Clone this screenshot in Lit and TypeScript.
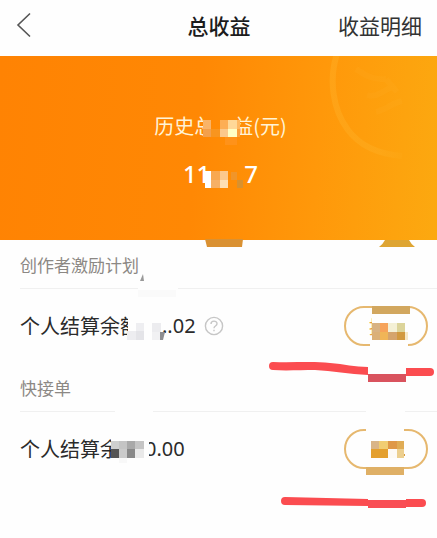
import { LitElement, html, css, svg } from "lit";
import { customElement } from "lit/decorators.js";

type Block = [x: number, y: number, w: number, h: number, fill: string];

const blocks = (list: Block[]) =>
  list.map(([x, y, w, h, fill]) => svg`<rect x=${x} y=${y} width=${w} height=${h} fill=${fill}></rect>`);

const PAPER = "#fefefe";

// Masks are listed in page units; each drawing's viewBox picks its own area.
const summaryMask: Block[] = [
  [203, 120, 8, 9, "#f9b468"],
  [203, 129, 8, 8, "#f3a04c"],
  [211, 129, 9, 8, "#f8951f"],
  [220, 120, 8, 9, "#fdae55"],
  [220, 129, 8, 8, "#fbc88c"],
  [228, 120, 9, 9, "#ffd898"],
  [228, 129, 9, 8, "#ffffc4"],
  [237, 120, 3, 9, "#ffb862"],
  [237, 129, 3, 8, "#fba03c"],
  [225, 137, 12, 8, "#ff9219"],
  [205, 171, 6, 17, "#ffffff"],
  [211, 171, 9, 9, "#f8a850"],
  [211, 180, 9, 8, "#f6b066"],
  [220, 171, 8, 9, "#fcc88c"],
  [220, 180, 8, 8, "#fedfb2"],
  [231, 172, 6, 8, "#f0952a"],
  [237, 180, 6, 8, "#d9912e"],
];

const creatorLeft: Block[] = [
  [138, 286, 40, 5, PAPER],
  [138, 290, 38, 7, "#fafafa"],
  [128, 314, 34, 26, PAPER],
  [127, 331, 9, 9, "#ededf0"],
  [136, 323, 8, 8, "#eeeef1"],
  [136, 331, 8, 9, "#e4e4e8"],
  [152, 323, 9, 9, "#ececef"],
  [152, 332, 8, 8, "#f1f1f3"],
];

const quickLeft: Block[] = [
  [115, 409, 38, 5, PAPER],
  [111, 435, 38, 27, PAPER],
  [111, 441, 8, 8, "#cfcfcf"],
  [119, 441, 8, 8, "#c4c4c4"],
  [127, 441, 8, 8, "#a9a9a9"],
  [135, 441, 9, 8, "#c5c5c5"],
  [111, 449, 8, 9, "#555555"],
  [119, 449, 8, 9, "#cacaca"],
  [127, 449, 8, 9, "#888888"],
  [135, 449, 9, 9, "#e9e9e9"],
  [119, 458, 8, 5, "#f8f8f8"],
];

const creatorRight: Block[] = [
  [372, 303, 38, 3, PAPER],
  [372, 306, 38, 8, "#d2a75f"],
  [370, 343, 38, 4, PAPER],
  [372, 315, 35, 26, PAPER],
  [372, 323, 8, 9, "#d8b283"],
  [372, 332, 8, 8, "#dbb078"],
  [380, 323, 8, 9, "#f6a35a"],
  [380, 332, 8, 8, "#f0b557"],
  [388, 323, 9, 9, "#f4f0d5"],
  [388, 332, 9, 8, "#d5a46c"],
  [397, 323, 8, 9, "#dcd49a"],
  [397, 332, 8, 8, "#d2993f"],
  [405, 332, 3, 8, "#f6e8c8"],
  [368, 374, 38, 8, "#d9535e"],
];

const quickRight: Block[] = [
  [366, 409, 39, 5, PAPER],
  [366, 426, 38, 6, PAPER],
  [366, 467, 38, 8, "#dfb066"],
  [371, 441, 8, 8, "#d9b487"],
  [379, 441, 9, 8, "#f1cd72"],
  [388, 441, 9, 8, "#df9848"],
  [397, 441, 7, 8, "#e0ac55"],
  [371, 449, 17, 9, "#e4a02f"],
  [388, 449, 9, 9, "#fdfaf5"],
  [397, 449, 7, 9, "#eccf8f"],
  [404, 454, 1, 2, "#d99a3a"],
  [368, 500, 38, 8, "#f94d54"],
];

@customElement("app-root")
export class AppRoot extends LitElement {
  static styles = css`
    :host {
      display: block;
      min-height: 100vh;
      background: #fefefe;
      color: #2b2b2b;
      font-family: "Noto Sans", "Noto Sans CJK SC", sans-serif;
    }
    * {
      box-sizing: border-box;
    }
    svg {
      display: block;
    }
    h1, h2, p {
      margin: 0;
      font-weight: 400;
    }
    button {
      padding: 0;
      border: 0;
      background: none;
      font: inherit;
      cursor: pointer;
    }
    .bar {
      display: grid;
      grid-template-columns: 1fr auto 1fr;
      align-items: center;
      height: 56px;
      padding: 0 15px 6px 16px;
      font-family: "Noto Sans CJK SC", sans-serif;
      font-size: 21px;
      line-height: 28px;
    }
    .title {
      font-size: 21px;
      font-weight: 500;
      color: #1c1c1c;
    }
    .detail {
      justify-self: end;
      color: #333;
      text-decoration: none;
    }
    .back {
      justify-self: start;
    }
    .summary {
      position: relative;
      display: flex;
      flex-direction: column;
      align-items: center;
      gap: 20px;
      height: 184px;
      padding: 56px 0 0 4px;
      color: #fff;
      background: linear-gradient(95deg, #ff8303 0%, #ff8804 45%, #ff980a 72%, #fca910 100%);
    }
    .caption {
      display: flex;
      font-family: "Noto Sans CJK SC", sans-serif;
      font-size: 20px;
      line-height: 28px;
      color: #fff3d6;
    }
    .cut {
      width: 9px;
      margin-right: 30px;
      overflow: hidden;
    }
    .total {
      display: flex;
      gap: 34px;
      font-size: 24px;
      line-height: 28px;
      font-weight: 500;
    }
    .coin {
      position: absolute;
      top: 0;
      right: 0;
    }
    .summary-mask {
      position: absolute;
      top: 0;
      left: 50%;
      margin-left: -70px;
    }
    .tab {
      position: absolute;
      top: 100%;
      right: 22px;
    }
    .group {
      position: relative;
    }
    .name {
      height: 49px;
      margin-left: 20px;
      padding-top: 12px;
      border-bottom: 1px solid #f0f0f0;
      font-family: "Noto Sans CJK SC", sans-serif;
      font-size: 17px;
      line-height: 26px;
      color: #8c8884;
    }
    .row {
      display: flex;
      align-items: center;
      height: 74px;
      padding: 0 9px 0 20px;
      font-size: 20px;
      line-height: 28px;
    }
    .label {
      font-family: "Noto Sans CJK SC", sans-serif;
    }
    .near {
      margin-left: 5px;
    }
    .far {
      margin-left: 22px;
    }
    .help {
      margin-left: 8px;
    }
    .pill {
      width: 84px;
      height: 40px;
      margin-left: auto;
      padding-left: 23px;
      border: 2px solid #e6b86f;
      border-radius: 20px;
      font-family: "Noto Sans CJK SC", sans-serif;
      font-size: 18px;
      line-height: 28px;
      text-align: left;
      color: #e8a040;
    }
    .glyph {
      display: block;
      width: 4px;
      height: 28px;
      overflow: hidden;
    }
    .mask {
      position: absolute;
      top: 0;
      pointer-events: none;
    }
    .left {
      left: 0;
    }
    .right {
      right: 0;
    }
    .front {
      z-index: 1;
    }
  `;

  render() {
    return html`
      <header class="bar">
        <button class="back" aria-label="返回">
          <svg width="16" height="26" viewBox="0 0 16 26" fill="none" stroke="#555" stroke-width="1.6">
            <path d="M14 1.5 2 13 14 24.5"></path>
          </svg>
        </button>
        <h1 class="title">总收益</h1>
        <a class="detail" href="#detail">收益明细</a>
      </header>

      <section class="summary">
        <svg class="coin" width="117" height="120" viewBox="320 56 117 120" fill="none" stroke="#ffb02a" aria-hidden="true">
          <defs>
            <linearGradient id="fade" gradientUnits="userSpaceOnUse" x1="330" y1="0" x2="412" y2="0">
              <stop offset="0" stop-color="#ffb42c" stop-opacity=".36"></stop>
              <stop offset=".6" stop-color="#ffb42c" stop-opacity=".3"></stop>
              <stop offset="1" stop-color="#ffb42c" stop-opacity="0"></stop>
            </linearGradient>
          </defs>
          <path d="M337 54C329 78 332 109 348 130C360 146 377 154 402 156" stroke="url(#fade)" stroke-width="6"></path>
          <path d="M356 69C366 76 374 80 386 79M367 95C377 98 384 90 394 86M376 112C386 110 390 104 402 101M386 79L397 92" stroke-opacity=".14" stroke-width="6"></path>
        </svg>
        <p class="caption"><span>历史</span><span class="cut">总</span><span>益(元)</span></p>
        <p class="total"><span>11</span><span>7</span></p>
        <svg class="summary-mask" width="140" height="192" viewBox="149 56 140 192" aria-hidden="true">
          ${blocks(summaryMask)}
          <path d="M205 239H243L242 247H207Z" fill="#da9132"></path>
        </svg>
        <svg class="tab" width="36" height="7" viewBox="0 0 36 7" aria-hidden="true">
          <path d="M6 0H30Q32 4 36 7H0Q4 4 6 0Z" fill="#dea533"></path>
        </svg>
      </section>

      <section class="group front">
        <h2 class="name">创作者激励计划</h2>
        <div class="row">
          <span class="label">个人结算余额</span>
          <span class="far">..02</span>
          <button class="help" aria-label="说明">
            <svg width="20" height="20" viewBox="0 0 20 20" fill="none" stroke="#c6c6c6" stroke-width="1.4">
              <circle cx="10" cy="10" r="8.6"></circle>
              <path d="M7 8C7 4.2 13 4.2 13 7.7C13 10 10 10 10 12.2M10 13.7V15.2"></path>
            </svg>
          </button>
          <button class="pill" aria-label="提现"><span class="glyph">提</span></button>
        </div>
        <svg class="mask left" width="200" height="123" viewBox="0 240 200 123" aria-hidden="true">
          ${blocks(creatorLeft)}
          <path d="M143 274L144 281H140Z" fill="#999"></path>
          <path d="M160 332H165L163 340H160Z" fill="#8d8d90"></path>
        </svg>
        <svg class="mask right" width="180" height="148" viewBox="257 240 180 148" aria-hidden="true">
          ${blocks(creatorRight)}
          <path d="M273 362C292 363 312 361 330 363C344 364 355 367 368 367V375C349 374 332 371 315 370C301 370 285 371 273 370A4 4 0 0 1 273 362Z" fill="#fb4c50"></path>
          <path d="M406 368H430A4 4 0 0 1 430 376H406Z" fill="#fb4c50"></path>
        </svg>
      </section>

      <section class="group">
        <h2 class="name">快接单</h2>
        <div class="row">
          <span class="label">个人结算余额</span>
          <span class="near">0.00</span>
          <button class="pill" aria-label="提现"></button>
        </div>
        <svg class="mask left" width="200" height="123" viewBox="0 363 200 123" aria-hidden="true">
          ${blocks(quickLeft)}
        </svg>
        <svg class="mask right" width="180" height="150" viewBox="257 363 180 150" aria-hidden="true">
          ${blocks(quickRight)}
          <path d="M285 497L368 499V506L285 505A4 4 0 0 1 285 497Z" fill="#fb4c50"></path>
          <path d="M406 499H422A4 4 0 0 1 422 507H406Z" fill="#fb4c50"></path>
        </svg>
      </section>
    `;
  }
}
